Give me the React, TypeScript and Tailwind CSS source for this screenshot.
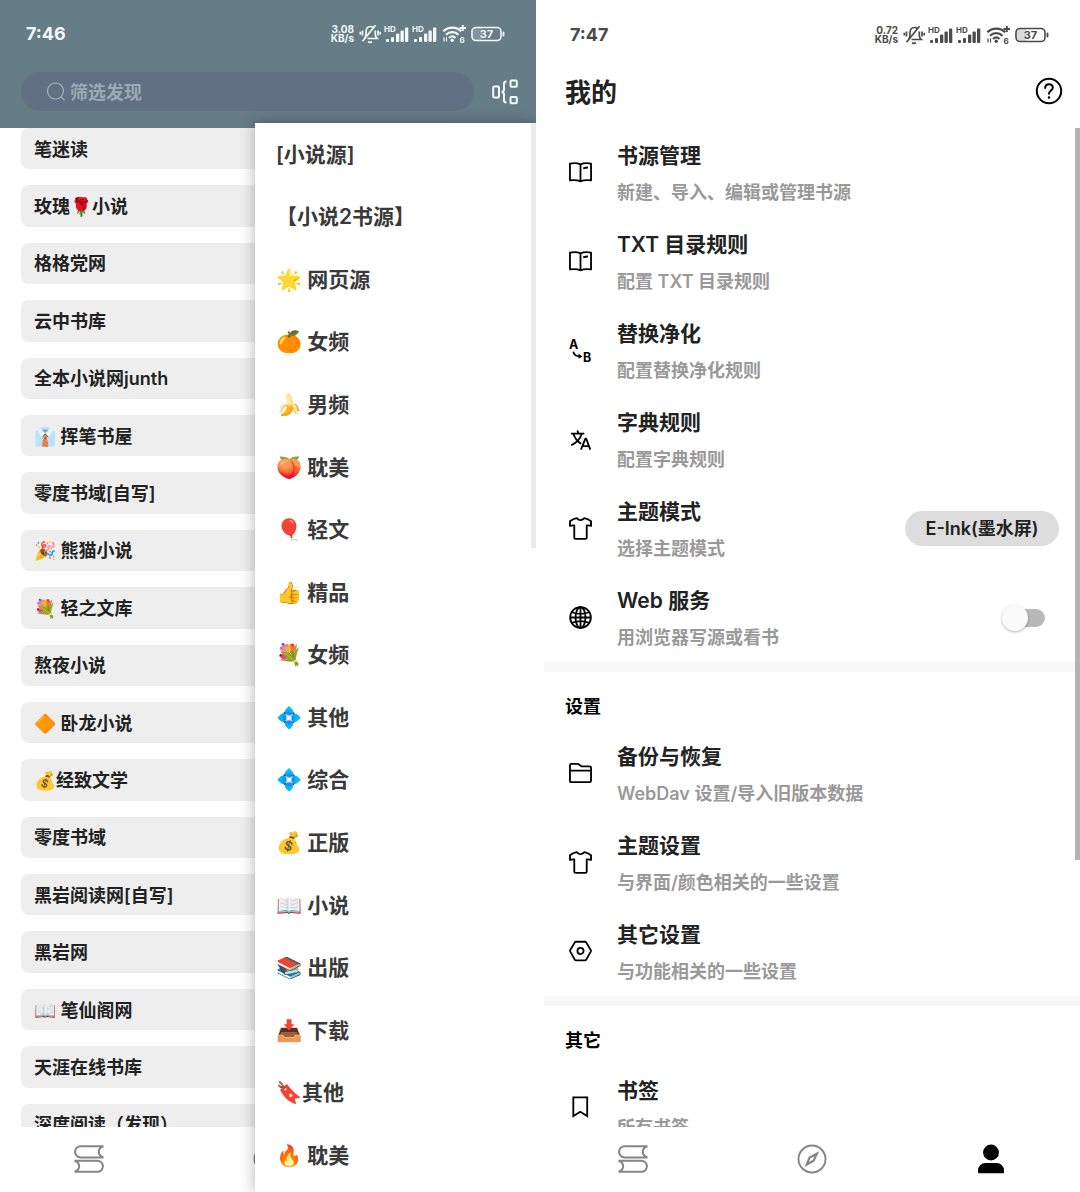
import type { ReactNode } from "react";

const SOURCES = [
  "笔迷读",
  "玫瑰🌹小说",
  "格格党网",
  "云中书库",
  "全本小说网junth",
  "👔 挥笔书屋",
  "零度书域[自写]",
  "🎉 熊猫小说",
  "💐 轻之文库",
  "熬夜小说",
  "🔶 卧龙小说",
  "💰经致文学",
  "零度书域",
  "黑岩阅读网[自写]",
  "黑岩网",
  "📖 笔仙阁网",
  "天涯在线书库",
  "深度阅读（发现）",
];

const GROUPS = [
  "[小说源]",
  "【小说2书源】",
  "🌟 网页源",
  "🍊 女频",
  "🍌 男频",
  "🍑 耽美",
  "🎈 轻文",
  "👍 精品",
  "💐 女频",
  "💠 其他",
  "💠 综合",
  "💰 正版",
  "📖 小说",
  "📚 出版",
  "📥 下载",
  "🔖其他",
  "🔥 耽美",
];

/* ---------- icons ---------- */

function LineIcon({ children }: { children: ReactNode }) {
  return (
    <svg
      viewBox="0 0 24 24"
      className="h-[23px] w-[23px] shrink-0"
      fill="none"
      stroke="currentColor"
      strokeWidth="1.9"
      strokeLinejoin="round"
      aria-hidden="true"
    >
      {children}
    </svg>
  );
}

function BookIcon() {
  return (
    <LineIcon>
      <path d="M1 2.700c4-.8 8-.6 11 .8 3-1.400 7-1.600 11-.8v17.600c-4-.6-8-.4-11 .9-3-1.300-7-1.500-11-.9zM12 3.500v17.500M14.800 7.700c1.600-.6 3.200-.9 5-.9" />
    </LineIcon>
  );
}

function ReplaceIcon() {
  return (
    <svg viewBox="0 0 24 24" className="h-[23px] w-[23px] shrink-0 overflow-visible" aria-hidden="true">
      <text x="0" y="10" fontSize="13" fontWeight="700" fontFamily="Inter, sans-serif">A</text>
      <text x="14.500" y="23.500" fontSize="13" fontWeight="700" fontFamily="Inter, sans-serif">B</text>
      <path d="M4.500 13.200c.6 3.200 2.800 4.800 6.500 5" fill="none" stroke="currentColor" strokeWidth="1.900" />
      <path d="M10 15.300l4 3-4 2.300z" />
    </svg>
  );
}

function TranslateIcon() {
  return (
    <LineIcon>
      <path d="M2 5.800h14M8.800 2.500l1 3.300M13.300 6c-1.500 5-5.500 9.500-11 12M4.500 6c1.600 4.500 4.500 8.300 8.300 10.500" />
      <path d="M12.500 22.500l4.600-11.500h.8L22.200 22.500M14.200 19h6.300" />
    </LineIcon>
  );
}

function ShirtIcon() {
  return (
    <LineIcon>
      <path d="M8 1.200c1.300 1.400 2.600 2 4 2s2.700-.6 4-2c2.500.4 5 1.600 7 3.300v4.800c-1.500-.5-3-.7-4.500-.5v12.600q0 1.500-1.500 1.500H7q-1.500 0-1.500-1.500V8.800C4 8.600 2.500 8.800 1 9.300V4.500c2-1.700 4.500-2.900 7-3.300z" />
    </LineIcon>
  );
}

function GlobeIcon() {
  return (
    <LineIcon>
      <circle cx="12" cy="12" r="10.800" />
      <ellipse cx="12" cy="12" rx="5.200" ry="10.800" />
      <path d="M12 1.200v21.600M1.200 12h21.600M3 6.500c5.600 2.200 12.400 2.200 18 0M3 17.500c5.600-2.200 12.400-2.200 18 0" />
    </LineIcon>
  );
}

function FolderIcon() {
  return (
    <LineIcon>
      <path d="M1 3.500q0-1.500 1.500-1.500h7l3.500 2.500h8.500Q23 4.500 23 6v13.500q0 1.500-1.500 1.500h-19Q1 21 1 19.500zM1 9h22" />
    </LineIcon>
  );
}

function HexIcon() {
  return (
    <LineIcon>
      <path d="M7.300 1.800h9.400q.8 0 1.200.7l4.800 8q.4.800 0 1.600l-4.800 8.500q-.4.700-1.200.7H7.300q-.8 0-1.200-.7l-4.800-8.500q-.4-.8 0-1.600l4.800-8q.4-.7 1.200-.7z" />
      <circle cx="12" cy="11.500" r="3.200" />
    </LineIcon>
  );
}

function BookmarkIcon() {
  return (
    <LineIcon>
      <path d="M4.500 1.500h14.500v19.500l-7.200-4.500-7.300 4.500z" strokeLinejoin="miter" />
    </LineIcon>
  );
}

function ShelfIcon() {
  return (
    <svg viewBox="0 0 30 28" className="h-7 w-[30px]" fill="none" stroke="currentColor" strokeWidth="2" aria-hidden="true">
      <path d="M29.500 1.200H6.600a5.600 5.600 0 0 0 0 11.200h22.900M29.500 1.200c-3.200 1-4.700 2.900-4.700 5.600s1.500 4.600 4.700 5.600" />
      <path d="M.5 15.800h22.900a5.500 5.500 0 0 1 0 11H.5M.5 15.800c3.200 1 4.700 2.800 4.700 5.500s-1.500 4.500-4.700 5.500" />
    </svg>
  );
}

function CompassIcon() {
  return (
    <svg viewBox="0 0 30 30" className="h-[30px] w-[30px]" fill="none" stroke="currentColor" aria-hidden="true">
      <circle cx="15" cy="15" r="13.500" strokeWidth="1.900" />
      <path d="M19.800 9.800l-3.200 6.800-6.800 3.800 2.800-6.800z" strokeWidth="2.200" />
    </svg>
  );
}

function PersonIcon() {
  return (
    <svg viewBox="0 0 28 30" className="h-[30px] w-7" fill="currentColor" aria-hidden="true">
      <circle cx="14" cy="8.500" r="7.900" />
      <path d="M1 28.500v-2.200a7.300 7.300 0 0 1 7.300-7.300h11.400a7.300 7.300 0 0 1 7.300 7.300v2.200q0 .8-.8.8H1.800q-.8 0-.8-.8z" />
    </svg>
  );
}

function TreeIcon() {
  return (
    <svg viewBox="0 0 26 26" className="h-[26px] w-[26px]" fill="none" stroke="currentColor" strokeWidth="2" aria-hidden="true">
      <rect x="1.200" y="7.500" width="5.800" height="11" rx="1" />
      <path d="M14.500 2.500c-1.800 0-2.500.6-2.500 2.300v5.500c0 1.600-.7 2.500-2.300 2.700 1.600.2 2.300 1.100 2.300 2.700v5.500c0 1.700.7 2.300 2.500 2.300" />
      <rect x="18.500" y="1.500" width="6.300" height="6.300" rx="1" />
      <rect x="18.500" y="18" width="6.300" height="6.300" rx="1" />
    </svg>
  );
}

function HelpIcon() {
  return (
    <svg viewBox="0 0 28 28" className="h-7 w-7" fill="none" stroke="currentColor" strokeWidth="2" aria-hidden="true">
      <circle cx="14" cy="14" r="12.200" />
      <path d="M10.200 11c0-2.200 1.600-3.700 3.800-3.700s3.800 1.500 3.800 3.500c0 2.500-3.800 3.100-3.800 6" strokeLinecap="round" />
      <circle cx="14" cy="20.500" r="1.300" fill="currentColor" stroke="none" />
    </svg>
  );
}

/* ---------- status bar ---------- */

function MutedBell() {
  return (
    <svg viewBox="0 0 22 20" className="h-5 w-[22px]" fill="none" stroke="currentColor" strokeWidth="1.700" aria-hidden="true">
      <path d="M5.500 14.500c1.200-1.400 1.500-2.400 1.500-4.300V8C7 4.500 8.500 2.500 11.300 2.500c1.400 0 2.400.4 3.200 1.200M16.300 6.500V10.500c0 2 .6 2.700 2 4H8.500" />
      <path d="M3.500 17.300L16.500 1.200M9 17.800c1.300.8 2.700.8 4 0M3.500 6.500v5M1.300 7.800v2.600M19 6.500v5M21.200 7.800v2.600" />
    </svg>
  );
}

function Signal() {
  return (
    <svg viewBox="0 0 24 18" className="h-[18px] w-6 overflow-visible" fill="currentColor" aria-hidden="true">
      <text x="-1" y="7" fontSize="8" fontWeight="700" fontFamily="Inter, sans-serif">HD</text>
      <rect x="1" y="14" width="3" height="3" rx="1" />
      <rect x="6" y="12" width="3" height="5" rx="1" />
      <rect x="11" y="8.500" width="3.300" height="8.500" rx="1" />
      <rect x="15.500" y="5.500" width="3.300" height="11.500" rx="1" />
      <rect x="20" y="2.500" width="3.300" height="14.500" rx="1" />
    </svg>
  );
}

function Wifi() {
  return (
    <svg viewBox="0 0 26 20" className="h-5 w-[26px]" fill="none" stroke="currentColor" aria-hidden="true">
      <path d="M2.300 7.300c5-5 13-5 18 0M5 10.800c3.500-3.500 9-3.500 12.500 0M8 14c1.900-1.800 4.600-1.800 6.500 0" strokeWidth="2.200" />
      <circle cx="11.200" cy="16.300" r="1.700" fill="currentColor" stroke="none" />
      <path d="M18.500 4h6.500M21.800 1v6" strokeWidth="1.900" />
      <path d="M3 13.500v4M5.500 13.500v4" strokeWidth="1.200" />
      <text x="18.500" y="18.500" fontSize="8" fontWeight="700" fontFamily="Inter, sans-serif" fill="currentColor" stroke="none">6</text>
    </svg>
  );
}

function Battery() {
  return (
    <svg viewBox="0 0 34 16" className="h-4 w-[34px]" fill="none" aria-hidden="true">
      <path d="M5 2h6v12H5q-3 0-3-3V5q0-3 3-3z" fill="currentColor" opacity="0.200" />
      <rect x="1" y="1.500" width="29" height="13" rx="4" stroke="currentColor" strokeWidth="1.600" />
      <path d="M32.500 6.500v3" stroke="currentColor" strokeWidth="1.800" strokeLinecap="round" />
      <text x="15.500" y="12" textAnchor="middle" fontSize="11" fontWeight="700" fontFamily="Inter, sans-serif" fill="currentColor">37</text>
    </svg>
  );
}

function StatusBar({ time, speed }: { time: string; speed: string }) {
  return (
    <div className="flex h-9 items-center justify-between pr-[31px]">
      <span className="text-lg font-bold">{time}</span>
      <div className="flex items-center gap-1">
        <div className="pr-px text-right text-[10px] leading-[9px] font-bold">
          <div>{speed}</div>
          <div>KB/s</div>
        </div>
        <MutedBell />
        <Signal />
        <Signal />
        <Wifi />
        <Battery />
      </div>
    </div>
  );
}

/* ---------- left: discovery ---------- */

function DiscoverScreen() {
  return (
    <section className="relative flex h-screen flex-col overflow-hidden bg-white">
      <header className="h-32 shrink-0 bg-[#667c87] pt-4 text-[#f2f8fb]">
        <div className="pl-[26px]">
          <StatusBar time="7:46" speed="3.08" />
        </div>
        <div className="mt-5 flex items-center gap-[18px] pr-[18px] pl-[21px]">
          <label className="flex h-[39px] flex-1 items-center gap-1 rounded-full bg-[#627083] pl-[25px] text-[#a3b3bd]">
            <svg viewBox="0 0 20 20" className="h-5 w-5 shrink-0" fill="none" stroke="currentColor" strokeWidth="1.200" aria-hidden="true">
              <circle cx="9.500" cy="9" r="8" />
              <path d="M15 15l3.500 3" />
            </svg>
            <input
              type="search"
              aria-label="筛选发现"
              placeholder="筛选发现"
              className="min-w-0 flex-1 bg-transparent pt-0.5 text-lg font-semibold outline-none placeholder:text-[#9aabb5]"
            />
          </label>
          <button type="button" aria-label="分组">
            <TreeIcon />
          </button>
        </div>
      </header>

      <div className="min-h-0 flex-1 overflow-hidden px-[21px]">
        <ul className="flex h-[calc(100%+18px)] flex-col gap-4">
          {SOURCES.map((name) => (
            <li key={name} className="flex min-h-0 flex-1">
              <button
                type="button"
                className="flex w-full items-center rounded-lg bg-[#eeeeee] px-[13px] pt-0.5 text-left text-lg font-semibold text-[#222222]"
              >
                {name}
              </button>
            </li>
          ))}
        </ul>
      </div>

      <BottomNav active="discover" />

      {/* group menu, opened over the list */}
      <div className="absolute top-[123px] right-0 bottom-0 left-[255px] bg-white shadow-[0_0_14px_rgba(0,0,0,0.3)]">
        <ul className="flex h-full flex-col pb-[5px]">
          {GROUPS.map((name, i) => (
            <li key={i} className="flex min-h-0 flex-1">
              <button
                type="button"
                className="flex w-full items-center px-[21px] text-left text-[21px] font-semibold text-[#3a3a3a]"
              >
                {name}
              </button>
            </li>
          ))}
        </ul>
        <div className="absolute top-0 right-0 h-[425px] w-[5px] bg-[#ebebeb]" />
      </div>
    </section>
  );
}

/* ---------- right: my page ---------- */

interface RowProps {
  icon: ReactNode;
  title: string;
  desc: string;
}

function RowBody({ icon, title, desc }: RowProps) {
  return (
    <>
      {icon}
      <span className="flex flex-col gap-[9px] pt-[3px] text-left">
        <span className="text-[21px] leading-7 font-semibold text-[#222222]">{title}</span>
        <span className="text-lg leading-7 font-semibold text-[#999999]">{desc}</span>
      </span>
    </>
  );
}

function Row(props: RowProps) {
  return (
    <button type="button" className="flex h-[89px] w-full items-center gap-[25px] pl-[25px]">
      <RowBody {...props} />
    </button>
  );
}

function SectionTitle({ children }: { children: string }) {
  return (
    <h2 className="h-[67px] border-t-10 border-[#f8f8f8] pt-[21px] pl-[21px] text-lg leading-7 font-bold text-black">
      {children}
    </h2>
  );
}

function MineScreen() {
  return (
    <section className="flex h-screen flex-col overflow-hidden bg-white">
      <header className="h-32 shrink-0 pt-[17px]">
        <div className="pl-[26px] text-[#4a4a4a]">
          <StatusBar time="7:47" speed="0.72" />
        </div>
        <div className="mt-4 flex items-center justify-between pr-[17px] pl-[21px]">
          <h1 className="pt-1 text-[26px] leading-10 font-bold text-[#222222]">我的</h1>
          <button type="button" aria-label="帮助">
            <HelpIcon />
          </button>
        </div>
      </header>

      <div className="relative min-h-0 flex-1 overflow-hidden">
        <Row icon={<BookIcon />} title="书源管理" desc="新建、导入、编辑或管理书源" />
        <Row icon={<BookIcon />} title="TXT 目录规则" desc="配置 TXT 目录规则" />
        <Row icon={<ReplaceIcon />} title="替换净化" desc="配置替换净化规则" />
        <Row icon={<TranslateIcon />} title="字典规则" desc="配置字典规则" />
        <div className="flex h-[89px] items-center justify-between pr-[21px] pl-[25px]">
          <div className="flex items-center gap-[25px]">
            <RowBody icon={<ShirtIcon />} title="主题模式" desc="选择主题模式" />
          </div>
          <button
            type="button"
            className="h-[35px] w-[154px] rounded-full bg-[#dddddd] pt-px text-lg font-semibold text-[#222222]"
          >
            E-Ink(墨水屏)
          </button>
        </div>
        <label className="flex h-[89px] items-center justify-between pr-[35px] pl-[25px]">
          <span className="flex items-center gap-[25px]">
            <RowBody icon={<GlobeIcon />} title="Web 服务" desc="用浏览器写源或看书" />
          </span>
          <input
            type="checkbox"
            role="switch"
            className="relative h-[18px] w-[38px] appearance-none rounded-full bg-[#b9b9b9] before:absolute before:-top-1 before:-left-[5px] before:h-[26px] before:w-[26px] before:rounded-full before:bg-[#fafafa] before:shadow-[0_1px_3px_rgba(0,0,0,0.3)] checked:bg-[#777777] checked:before:left-[18px]"
          />
        </label>

        <SectionTitle>设置</SectionTitle>
        <Row icon={<FolderIcon />} title="备份与恢复" desc="WebDav 设置/导入旧版本数据" />
        <Row icon={<ShirtIcon />} title="主题设置" desc="与界面/颜色相关的一些设置" />
        <Row icon={<HexIcon />} title="其它设置" desc="与功能相关的一些设置" />

        <SectionTitle>其它</SectionTitle>
        <Row icon={<BookmarkIcon />} title="书签" desc="所有书签" />

        <div className="absolute top-0 right-0 h-[732px] w-[5px] bg-[#b4b4b4]" />
      </div>

      <BottomNav active="mine" />
    </section>
  );
}

function BottomNav({ active }: { active: "discover" | "mine" }) {
  return (
    <nav className="grid h-[65px] shrink-0 grid-cols-3 bg-white pb-0.5 text-[#858585]">
      <button type="button" aria-label="书架" className="flex items-center justify-center">
        <ShelfIcon />
      </button>
      <button type="button" aria-label="发现" className="flex items-center justify-center">
        <CompassIcon />
      </button>
      <button
        type="button"
        aria-label="我的"
        className={`flex items-center justify-center ${active === "mine" ? "text-black" : ""}`}
      >
        <PersonIcon />
      </button>
    </nav>
  );
}

export default function App() {
  return (
    <main className="grid grid-cols-2 gap-2 bg-white font-['Inter','Noto_Sans_CJK_SC',sans-serif]">
      <DiscoverScreen />
      <MineScreen />
    </main>
  );
}
